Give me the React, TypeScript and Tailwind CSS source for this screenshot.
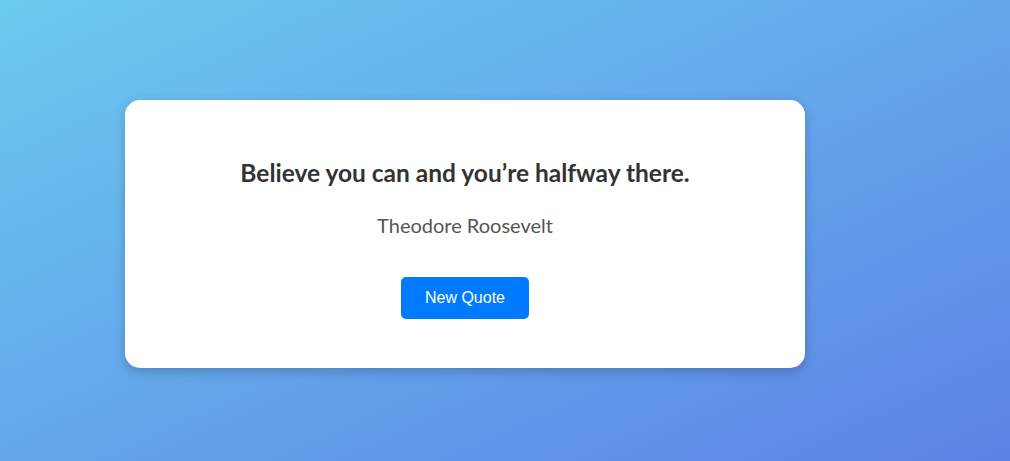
import React, { useState } from 'react';

const QUOTES = [
  { text: 'Believe you can and you’re halfway there.', author: 'Theodore Roosevelt' },
  { text: 'The only way to do great work is to love what you do.', author: 'Steve Jobs' },
];

export default function App() {
  const [idx, setIdx] = useState(0);
  const quote = QUOTES[idx];

  return (
    <div className="min-h-[461px] w-full bg-gradient-to-br from-[#6bcaef] to-[#5d82e6] flex items-center pl-[125px] pt-[7px]">
      <div className="w-[680px] h-[268px] bg-white rounded-[15px] shadow-[0_4px_12px_rgba(0,0,0,0.2)] flex flex-col items-center pt-[56px] font-['Lato','Open_Sans',sans-serif]">
        <h2 className="text-[24.5px] leading-[33px] font-bold text-[#333]">{quote.text}</h2>
        <p className="mt-[23px] text-[20px] leading-[27px] text-[#555]">{quote.author}</p>
        <button
          onClick={() => setIdx((idx + 1) % QUOTES.length)}
          className="mt-[38px] w-[128px] h-[42px] rounded-[5px] bg-[#007bff] text-white text-[16px] font-['Liberation_Sans',Arial,sans-serif]"
        >
          New Quote
        </button>
      </div>
    </div>
  );
}
